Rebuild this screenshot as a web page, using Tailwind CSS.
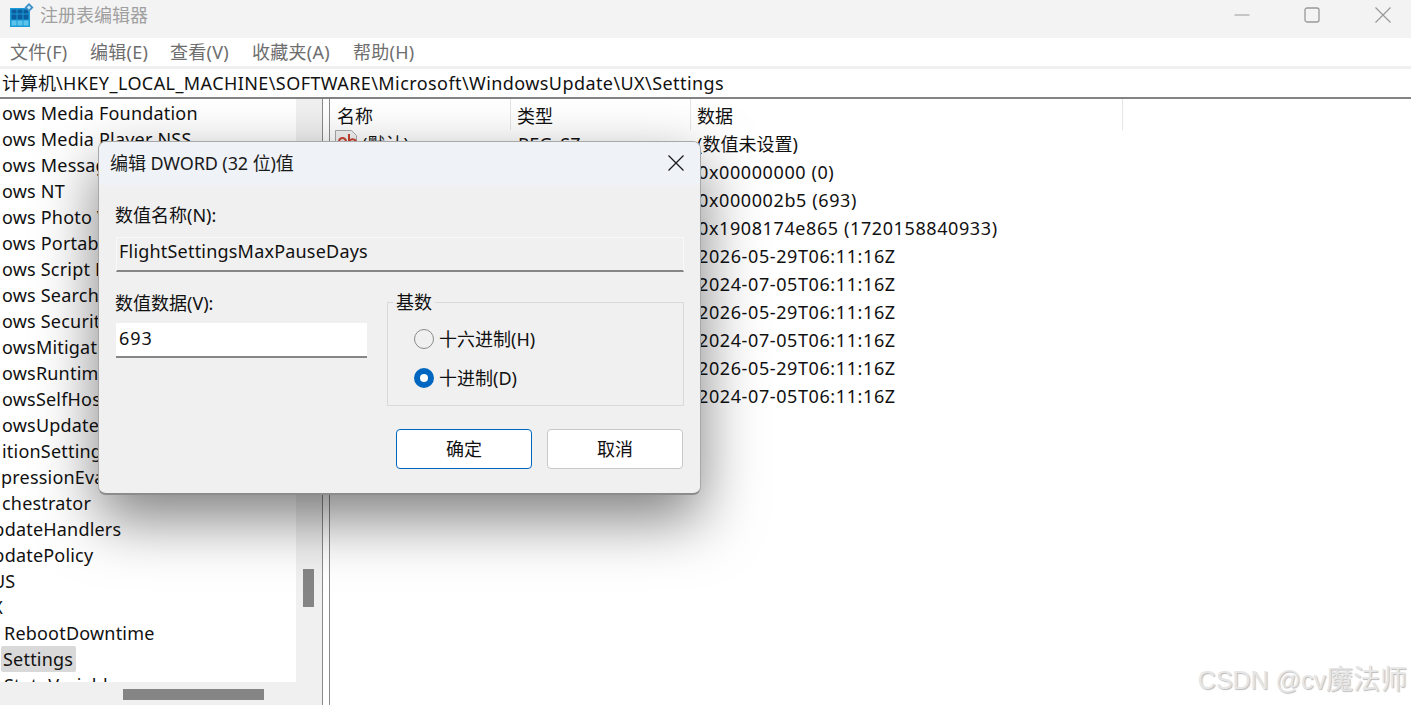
<!DOCTYPE html>
<html lang="zh-CN">
<head>
  <meta charset="UTF-8">
  <title>注册表编辑器</title>
  <script src="https://cdn.jsdelivr.net/npm/@tailwindcss/browser@4"></script>
</head>
<body class="bg-white text-[#111] overflow-hidden font-['Noto_Sans','Noto_Sans_CJK_SC',sans-serif] text-[18px]">
<div class="relative w-[1411px] h-[705px] overflow-hidden flex flex-col">

  <!-- title bar -->
  <header class="h-[38px] shrink-0 bg-[#f3f3f3] flex items-center pl-[10px] pb-[8px]">
    <svg width="24" height="24" viewBox="0 0 24 24">
      <rect x="0" y="5" width="20" height="19" fill="#1a9ad6"/>
      <path d="M1.500 10.500h5v-4h-5zM7.500 10.500h5v-4h-5zM13.500 10.500h5v-4h-5zM1.500 16.500h5v-5h-5zM7.500 16.500h5v-5h-5zM13.500 16.500h5v-5h-5z" fill="#0c5d9c"/>
      <path d="M1.500 22.500h5v-5h-5zM7.500 22.500h5v-5h-5zM13.500 22.500h5v-5h-5z" fill="#5cc3ea"/>
      <path d="M19 0l4.500 4.500-4.500 4.500-4.500-4.500z" fill="#3a8fc8"/>
      <path d="M19 2.500l2 2-2 2-2-2z" fill="#cfe8f6"/>
    </svg>
    <span class="ml-[6px] text-[#a0a0a0]">注册表编辑器</span>
    <div class="ml-auto flex items-center">
      <svg width="16" height="16" viewBox="0 0 16 16" class="mr-[54px]"><path d="M0.500 8h15" stroke="#999" stroke-width="1"/></svg>
      <svg width="16" height="16" viewBox="0 0 16 16" class="mr-[55px]"><rect x="1" y="1" width="14" height="14" rx="2" fill="none" stroke="#999" stroke-width="1.300"/></svg>
      <svg width="16" height="16" viewBox="0 0 16 16" class="mr-[20px]"><path d="M0.500 0.500l15 15M15.500 0.500l-15 15" stroke="#999" stroke-width="1.200"/></svg>
    </div>
  </header>

  <!-- menu -->
  <nav class="h-[28px] shrink-0 flex items-center pl-[10px] text-[#6e6e6e] tracking-[0.25px]">
    <span class="w-[80px]">文件(F)</span>
    <span class="w-[80px]">编辑(E)</span>
    <span class="w-[82px]">查看(V)</span>
    <span class="w-[101px]">收藏夹(A)</span>
    <span>帮助(H)</span>
  </nav>
  <div class="h-[3px] shrink-0 bg-[#f0f0f0]"></div>

  <!-- address bar -->
  <div class="h-[30px] shrink-0 border-b-2 border-[#838383] pl-[2px] flex items-center whitespace-nowrap"><span>计算机</span><span class="tracking-[0.42px]">\HKEY_LOCAL_MACHINE\SOFTWARE\Microsoft\WindowsUpdate\UX\Settings</span></div>

  <div class="flex-1 flex min-h-0">
    <!-- tree pane, scrolled sideways so the names start cut off -->
    <aside class="w-[323px] shrink-0 flex flex-col border-r border-[#8a8a8a]">
      <div class="flex-1 flex min-h-0">
        <div class="w-[296px] overflow-hidden pt-px whitespace-nowrap leading-[26px] tracking-[0.2px]">
          <div class="h-[26px] pl-[2px]">ows Media Foundation</div>
          <div class="h-[26px] pl-[2px]">ows Media Player NSS</div>
          <div class="h-[26px] pl-[2px]">ows Messaging Subsystem</div>
          <div class="h-[26px] pl-[2px]">ows NT</div>
          <div class="h-[26px] pl-[2px]">ows Photo Viewer</div>
          <div class="h-[26px] pl-[2px]">ows Portable Devices</div>
          <div class="h-[26px] pl-[2px]">ows Script Host</div>
          <div class="h-[26px] pl-[2px]">ows Search</div>
          <div class="h-[26px] pl-[2px]">ows Security</div>
          <div class="h-[26px] pl-[2px]">owsMitigation</div>
          <div class="h-[26px] pl-[2px]">owsRuntime</div>
          <div class="h-[26px] pl-[2px]">owsSelfHost</div>
          <div class="h-[26px] pl-[2px]">owsUpdate</div>
          <div class="h-[26px] pl-[2px]">itionSettings</div>
          <div class="h-[26px] pl-px">pressionEvaluators</div>
          <div class="h-[26px] pl-[2px]">chestrator</div>
          <div class="h-[26px] -ml-[20px]">UpdateHandlers</div>
          <div class="h-[26px] -ml-[20px]">UpdatePolicy</div>
          <div class="h-[26px] -ml-[8px]">US</div>
          <div class="h-[26px] -ml-[21px]">UX</div>
          <div class="h-[26px] pl-[4px]">RebootDowntime</div>
          <div class="h-[26px] ml-px pl-[2px] w-[75px] bg-[#d9d9d9] rounded-[2px]">Settings</div>
          <div class="h-[26px] pl-[4px]">StateVariables</div>
        </div>
        <div class="w-[26px] bg-[#f0f0f0] flex flex-col pl-[7px] pt-[470px]">
          <div class="w-[11px] h-[38px] bg-[#858585]"></div>
        </div>
      </div>
      <div class="h-[23px] shrink-0 bg-[#f0f0f0] pl-[123px] pt-[7px]">
        <div class="w-[141px] h-[11px] bg-[#858585]"></div>
      </div>
    </aside>
    <div class="w-[6px] shrink-0"></div>

    <!-- values pane -->
    <main class="flex-1 border-l border-[#8a8a8a] min-w-0">
      <div class="h-[31px] flex">
        <div class="w-[181px] pl-[7px] pt-[4px] border-r border-[#e5e5e5]">名称</div>
        <div class="w-[180px] pl-[6px] pt-[4px] border-r border-[#e5e5e5]">类型</div>
        <div class="w-[432px] pl-[6px] pt-[4px] border-r border-[#e5e5e5]">数据</div>
      </div>
      <div class="h-[28px] flex items-center whitespace-nowrap">
        <div class="w-[181px] pl-[4px] flex items-center gap-[4px]">
          <svg width="24" height="24" viewBox="0 0 24 24" class="-mt-[4px]">
            <path d="M1.500 0.500h16l5 5v17h-21z" fill="#f4f4f4" stroke="#a8a8a8"/>
            <path d="M5 11c1-4 6-4 7 0v8M5 13c2-1.500 5-1.500 7 0M15 4v15M15 11c3-3 7-2 7 2s-4 5-7 3" fill="none" stroke="#c8432f" stroke-width="2"/>
          </svg>
          <span>(默认)</span>
        </div>
        <div class="w-[180px] pl-[7px]">REG_SZ</div>
        <div class="pl-[6px]">(数值未设置)</div>
      </div>
      <div class="pl-[368px] whitespace-nowrap leading-[28px] tracking-[0.6px]">
        <div>0x00000000 (0)</div>
        <div>0x000002b5 (693)</div>
        <div>0x1908174e865 (1720158840933)</div>
        <div>2026-05-29T06:11:16Z</div>
        <div>2024-07-05T06:11:16Z</div>
        <div>2026-05-29T06:11:16Z</div>
        <div>2024-07-05T06:11:16Z</div>
        <div>2026-05-29T06:11:16Z</div>
        <div>2024-07-05T06:11:16Z</div>
      </div>
    </main>
  </div>

  <!-- edit dialog -->
  <section class="absolute left-[98px] top-[141px] w-[603px] h-[354px] bg-[#f0f0f0] rounded-[8px] overflow-hidden border border-[#a8a8a8] border-b-2 border-b-[#8c8c8c] shadow-[0_24px_60px_rgba(0,0,0,0.5)] flex flex-col z-10">
    <div class="h-[43px] shrink-0 bg-[#eff3f8] flex items-center justify-between pl-[11px] pr-[16px] pb-[1px] text-[#1a1a1a]">
      <span class="tracking-[-0.1px]">编辑 DWORD (32 位)值</span>
      <svg width="16" height="16" viewBox="0 0 16 16"><path d="M0.500 0.500l15 15M15.500 0.500l-15 15" stroke="#1a1a1a" stroke-width="1.300"/></svg>
    </div>
    <div class="flex-1 px-[16px] pt-[18px]">
      <div class="h-[26px] flex items-center -mt-px">数值名称(N):</div>
      <div class="mt-[9px] ml-px h-[35px] bg-[#f0f0f0] border border-[#f8f8f8] border-b-2 border-b-[#868686] pl-[2px] pb-[5px] flex items-center tracking-[0.2px]">FlightSettingsMaxPauseDays</div>
      <div class="mt-[18px] flex">
        <div class="w-[252px]">
          <div class="h-[26px] flex items-center">数值数据(V):</div>
          <div class="mt-[7px] ml-px h-[35px] bg-white border-b-2 border-b-[#868686] pl-[3px] pb-[2px] flex items-center tracking-[1px]">693</div>
        </div>
        <div class="relative ml-[20px] mt-[12px] w-[297px] h-[104px] border border-[#d9d9d9] pl-[26px] pt-[23px]">
          <span class="absolute left-[5px] -top-[14px] bg-[#f0f0f0] px-[3px]">基数</span>
          <label class="flex items-center gap-[5px] h-[26px]">
            <span class="w-[20px] h-[20px] rounded-full border border-[#8a8a8a]"></span>十六进制(H)
          </label>
          <label class="flex items-center gap-[5px] h-[26px] mt-[13px]">
            <span class="w-[20px] h-[20px] rounded-full border-[6px] border-[#0067c0] bg-white"></span>十进制(D)
          </label>
        </div>
      </div>
      <div class="mt-[23px] ml-[281px] flex gap-[15px]">
        <button class="w-[136px] h-[40px] bg-white border border-[#0067c0] rounded-[4px]">确定</button>
        <button class="w-[136px] h-[40px] bg-white border border-[#c8c8c8] rounded-[4px]">取消</button>
      </div>
    </div>
  </section>

  <!-- watermark -->
  <div class="absolute right-[4px] top-[660px] text-[27px] text-[#e6e6e6] [text-shadow:1px_1px_1px_#bcbcbc] whitespace-nowrap font-['Liberation_Sans','Noto_Sans_CJK_SC',sans-serif] z-20"><span class="text-[25px]">CSDN @cv</span>魔法师</div>
</div>
</body>
</html>
